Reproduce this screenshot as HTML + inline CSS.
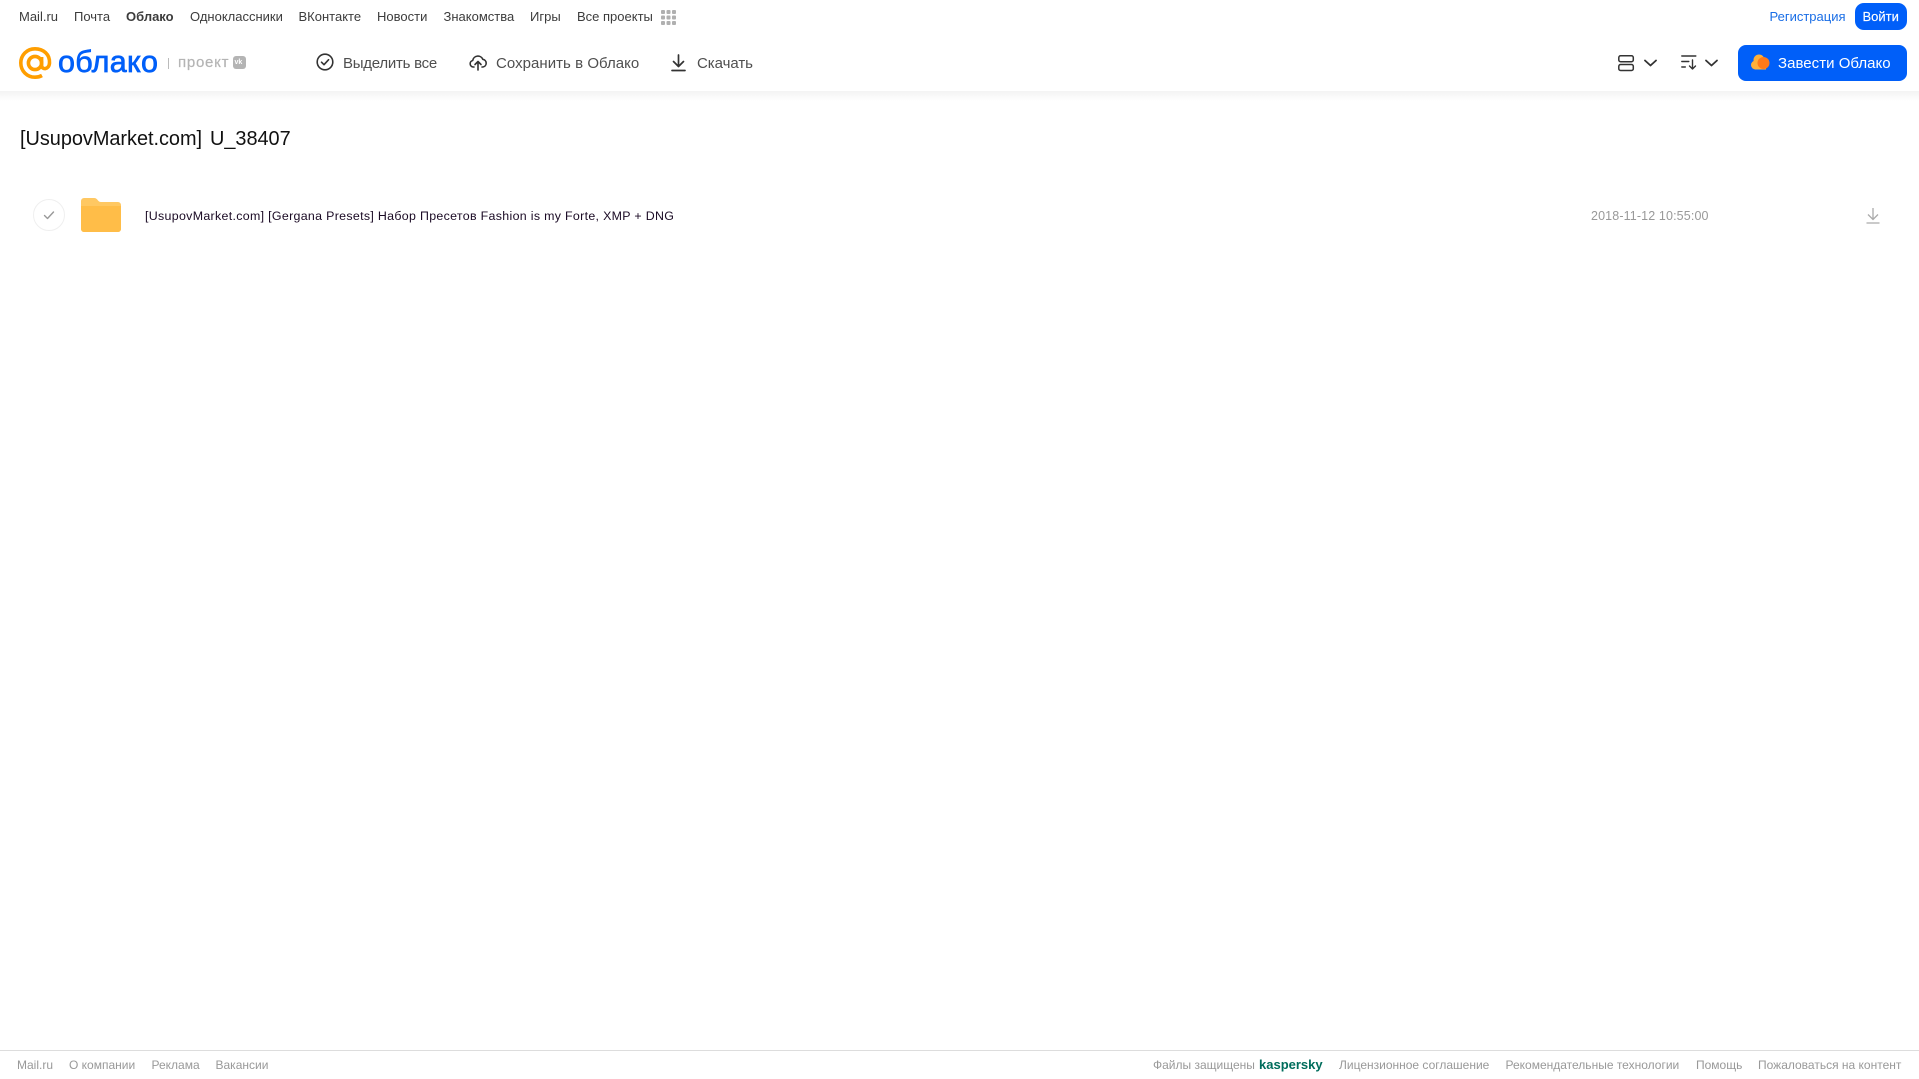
<!DOCTYPE html>
<html lang="ru"><head><meta charset="utf-8"><title>Облако</title>
<style>
html,body{margin:0;padding:0;background:#fff;width:1919px;height:1079px;overflow:hidden;font-family:"Liberation Sans",sans-serif}
span.t{position:absolute;white-space:nowrap;line-height:20px}
.n{top:7px;font-size:13px;color:#3c3c3c}
.b{top:54px;font-size:15px;color:#4f4f4f}
.f{top:1055px;font-size:12px;color:#999}
svg{position:absolute;overflow:visible}
#shadow{position:absolute;left:0;top:91px;width:1919px;height:10px;background:linear-gradient(#f3f3f3,#fff)}
</style></head><body>
<div id="shadow"></div>
<span class="t n" style="left:19px">Mail.ru</span>
<span class="t n" style="left:74px">Почта</span>
<span class="t n" style="left:126px;font-weight:bold">Облако</span>
<span class="t n" style="left:190px">Одноклассники</span>
<span class="t n" style="left:298.500px">ВКонтакте</span>
<span class="t n" style="left:377px">Новости</span>
<span class="t n" style="left:443.500px">Знакомства</span>
<span class="t n" style="left:530px">Игры</span>
<span class="t n" style="left:577px">Все проекты</span>
<svg style="left:661px;top:10px" width="15" height="15" fill="#b0b0b0"><rect width="4" height="4" rx="1"/><rect x="5.500" width="4" height="4" rx="1"/><rect x="11" width="4" height="4" rx="1"/><rect y="5.500" width="4" height="4" rx="1"/><rect x="5.500" y="5.500" width="4" height="4" rx="1"/><rect x="11" y="5.500" width="4" height="4" rx="1"/><rect y="11" width="4" height="4" rx="1"/><rect x="5.500" y="11" width="4" height="4" rx="1"/><rect x="11" y="11" width="4" height="4" rx="1"/></svg>

<svg style="left:19px;top:47px" width="33" height="33" fill="none" stroke="#ff9e00" stroke-width="3.600"><circle cx="16" cy="16" r="6.600"/><path d="M22.600 10v8.500c0 4.500 7.400 4.500 7.900-2.500C31 7.500 24.500 1.800 16 1.800 8 1.800 1.800 8 1.800 16S8 30.200 16 30.200c2.800 0 5-.6 7-1.700"/></svg>
<span class="t" style="left:58px;top:50px;font-size:30.500px;line-height:24px;color:#005ff9;-webkit-text-stroke:.7px #005ff9;letter-spacing:.3px">облако</span>
<div style="position:absolute;left:168px;top:58px;width:1px;height:11px;background:#bbb"></div>
<span class="t" style="left:178px;top:53px;font-size:15px;color:#b4b4b4;-webkit-text-stroke:.2px #b4b4b4;letter-spacing:.75px">проект</span>
<div style="position:absolute;left:233px;top:56px;width:13px;height:13px;border-radius:3px;background:#b4b4b4"></div>
<span class="t" style="left:234.500px;top:57px;font-size:7px;line-height:11px;font-weight:bold;color:#fff">vk</span>

<svg style="left:316px;top:53px" width="18" height="18" fill="none" stroke="#333" stroke-width="1.600"><circle cx="9" cy="9" r="7.800"/><path d="M5.500 9.200l2.500 2.500 4.600-5" stroke-linecap="round" stroke-linejoin="round"/></svg>
<span class="t b" style="left:343px;letter-spacing:-.25px">Выделить все</span>
<svg style="left:469px;top:54px" width="18" height="17" fill="none" stroke="#333" stroke-width="1.600" stroke-linecap="round" stroke-linejoin="round"><path d="M5 13H4.200A3.300 3.300 0 0 1 3.700 6.500 5.300 5.300 0 0 1 13.800 5.300 3.900 3.900 0 0 1 14 13H13"/><path d="M9 16V8M6 10.500L9 7.500l3 3"/></svg>
<span class="t b" style="left:496px;letter-spacing:.04px">Сохранить в Облако</span>
<svg style="left:671px;top:54px" width="15" height="18" fill="none" stroke="#333" stroke-width="1.700" stroke-linecap="round" stroke-linejoin="round"><path d="M7.500 1v11M2.500 7.500l5 5 5-5M1 16.500h13"/></svg>
<span class="t b" style="left:697px;letter-spacing:-.05px">Скачать</span>

<span class="t" style="left:1769.500px;top:7px;font-size:13px;color:#1a6ee6">Регистрация</span>
<div style="position:absolute;left:1855px;top:3px;width:52px;height:27px;border-radius:9px;background:#005ff9"></div>
<span class="t" style="left:1862.500px;top:7px;font-size:13px;color:#fff;-webkit-text-stroke:.15px #fff">Войти</span>

<svg style="left:1618px;top:55px" width="16" height="17" fill="none" stroke="#333" stroke-width="1.500"><rect x=".8" y=".8" width="14.500" height="6" rx="1.800"/><rect x=".8" y="9.500" width="14.500" height="6" rx="1.800"/></svg>
<svg style="left:1643.500px;top:59px" width="13" height="8" fill="none" stroke="#333" stroke-width="1.800" stroke-linecap="round" stroke-linejoin="round"><path d="M1 1.500L6.500 6.500 12 1.500"/></svg>
<svg style="left:1681px;top:55px" width="17" height="15" fill="none" stroke="#333" stroke-width="1.400" stroke-linecap="round" stroke-linejoin="round"><path d="M.8 1h14M.8 6.500h7M.8 12h3.500M11.500 5v9M8.500 11l3 3 3-3"/></svg>
<svg style="left:1705px;top:59px" width="13" height="8" fill="none" stroke="#333" stroke-width="1.800" stroke-linecap="round" stroke-linejoin="round"><path d="M1 1.500L6.500 6.500 12 1.500"/></svg>
<div style="position:absolute;left:1738px;top:45px;width:169px;height:36px;border-radius:8px;background:#005ff9"></div>
<svg style="left:1751px;top:54px" width="19" height="17"><circle cx="8" cy="6" r="5.500" fill="#ffb03a"/><circle cx="4.500" cy="11" r="4.500" fill="#ffb03a"/><rect x="4" y="8" width="11" height="7.500" fill="#ffb03a"/><circle cx="12.500" cy="9" r="6" fill="#ff7a1a"/></svg>
<span class="t" style="left:1778px;top:53.500px;font-size:15px;color:#fff;letter-spacing:.03px">Завести Облако</span>

<span class="t" style="left:20px;top:126.500px;font-size:19.900px;line-height:24px;color:#111;word-spacing:2.500px;letter-spacing:-.02px">[UsupovMarket.com] U_38407</span>

<svg style="left:33px;top:199px" width="32" height="32" fill="none"><circle cx="16" cy="16" r="15.500" stroke="#efefef"/><path d="M11.500 16.500l3 3 6-6.500" stroke="#999" stroke-width="1.400" stroke-linecap="round" stroke-linejoin="round"/></svg>
<svg style="left:81px;top:198px" width="40" height="34"><path d="M0 3a3 3 0 0 1 3-3h10c2 0 3 1 4 2.500 1 1 1.500 1.500 3 1.500h17a3 3 0 0 1 3 3v24a3 3 0 0 1-3 3H3a3 3 0 0 1-3-3z" fill="#ffc862"/><path d="M0 8h40v23a3 3 0 0 1-3 3H3a3 3 0 0 1-3-3z" fill="#ffbd48"/></svg>
<span class="t" style="left:145px;top:206px;font-size:12.400px;color:#1a0a24;letter-spacing:.32px">[UsupovMarket.com] [Gergana Presets] Набор Пресетов Fashion is my Forte, XMP + DNG</span>
<span class="t" style="left:1591px;top:206px;font-size:12.500px;color:#999;letter-spacing:.13px">2018-11-12 10:55:00</span>
<svg style="left:1866px;top:207px" width="14" height="17" fill="none" stroke="#aaa" stroke-width="1.300"><path d="M7 1v11M2 7.500l5 5 5-5M.5 16h13"/></svg>

<div style="position:absolute;left:0;top:1050px;width:1919px;height:1px;background:#ddd"></div>
<span class="t f" style="left:17px">Mail.ru</span>
<span class="t f" style="left:69px">О компании</span>
<span class="t f" style="left:151.500px">Реклама</span>
<span class="t f" style="left:215.500px">Вакансии</span>
<span class="t f" style="left:1153px">Файлы защищены</span>
<span class="t f" style="left:1259px;top:1055px;font-size:13px;font-weight:bold;color:#006d5c">kaspersky</span>
<span class="t f" style="left:1339px">Лицензионное соглашение</span>
<span class="t f" style="left:1505.500px">Рекомендательные технологии</span>
<span class="t f" style="left:1696px">Помощь</span>
<span class="t f" style="left:1758px">Пожаловаться на контент</span>
</body></html>
